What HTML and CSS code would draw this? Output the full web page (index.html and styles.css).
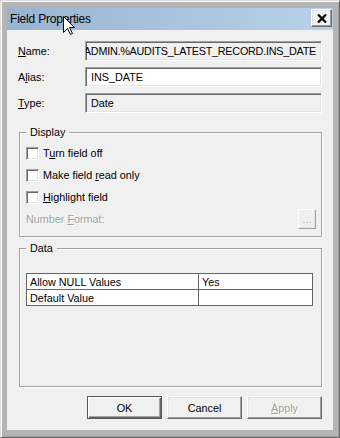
FILE: index.html
```html
<!DOCTYPE html>
<html lang="en">
<head>
    <meta charset="UTF-8">
    <title>Field Properties</title>
    <link rel="stylesheet" href="styles.css">
</head>
<body>
    <div class="window">
        <div class="titlebar">
            <span class="title">Field Properties</span>
            <span class="close">
                <svg width="10" height="9" viewBox="0 0 10 9">
                    <path d="M1 0.5 L9 8.5 M9 0.5 L1 8.5" stroke="#000" stroke-width="2.2" fill="none"/>
                </svg>
            </span>
        </div>

        <div class="client">
            <div class="fields">
                <span class="label"><u>N</u>ame:</span>
                <div class="box readonly scrolled"><span class="value">ADMIN.%AUDITS_LATEST_RECORD.INS_DATE</span></div>

                <span class="label">A<u>l</u>ias:</span>
                <div class="box"><span class="value">INS_DATE</span></div>

                <span class="label"><u>T</u>ype:</span>
                <div class="box readonly"><span class="value">Date</span></div>
            </div>

            <fieldset class="group display">
                <legend>Display</legend>
                <label class="check"><span class="checkbox"></span><span>T<u>u</u>rn field off</span></label>
                <label class="check"><span class="checkbox"></span><span>Make field <u>r</u>ead only</span></label>
                <label class="check"><span class="checkbox"></span><span><u>H</u>ighlight field</span></label>
                <div class="format-row">
                    <span class="disabled">Number <u>F</u>ormat:</span>
                    <span class="dots">...</span>
                </div>
            </fieldset>

            <fieldset class="group data">
                <legend>Data</legend>
                <table class="grid">
                    <tr><td class="key">Allow NULL Values</td><td>Yes</td></tr>
                    <tr><td class="key">Default Value</td><td></td></tr>
                </table>
            </fieldset>

            <div class="buttons">
                <span class="btn default">OK</span>
                <span class="btn">Cancel</span>
                <span class="btn off"><u>A</u>pply</span>
            </div>
        </div>

        <!-- mouse pointer over the caption -->
        <svg class="cursor" width="13" height="20" viewBox="0 0 13 20">
            <path d="M0.5 0.5 L0.5 16.5 L4.5 12.5 L7.5 18.5 L9.5 17.5 L6.5 11.5 L11.5 11.5 Z" fill="#fff" stroke="#000" stroke-width="1"/>
        </svg>
    </div>
</body>
</html>
```

FILE: styles.css
```css
* {
    box-sizing: border-box;
}
body {
    margin: 0;
    font-family: "Liberation Sans", Arial, sans-serif;
    font-size: 10.8px;
    color: #000;
    background: #b4b4b4;
}
.window {
    position: relative;
    width: 340px;
    height: 438px;
    background: #b4b4b4;
    border: 1px solid;
    border-color: #dcdcdc #696969 #696969 #dcdcdc;
    box-shadow: inset 1px 1px 0 #fff, inset -1px -1px 0 #a0a0a0;
    padding: 7px 6px 7px 6px;
    display: flex;
    flex-direction: column;
}
.titlebar {
    height: 22px;
    background: linear-gradient(to right, #99b4d1, #b9d1ea);
    display: flex;
    align-items: center;
    justify-content: space-between;
    padding: 0 1px 0 3px;
}
.title {
    font-size: 12px;
    letter-spacing: -0.2px;
}
.close {
    width: 21px;
    height: 18px;
    background: #f0f0f0;
    border: 1px solid;
    border-color: #fff #696969 #696969 #fff;
    box-shadow: inset -1px -1px 0 #a0a0a0, inset 1px 1px 0 #e3e3e3;
    display: flex;
    align-items: center;
    justify-content: center;
    margin-top: -2px;
}
.client {
    flex: 1;
    background: #f0f0f0;
    display: flex;
    flex-direction: column;
    padding: 11px 11px 11px 11px;
}
.fields {
    display: grid;
    grid-template-columns: 67px 1fr;
    row-gap: 6px;
}
.label {
    padding-top: 4px;
    line-height: 13px;
}
.box {
    height: 20px;
    background: #fff;
    border: 1px solid;
    border-color: #a0a0a0 #fff #fff #a0a0a0;
    box-shadow: inset 1px 1px 0 #696969, inset -1px -1px 0 #e3e3e3;
    display: flex;
    align-items: center;
    padding: 0 5px;
    overflow: hidden;
    white-space: nowrap;
}
.box.readonly {
    background: #f0f0f0;
}
.box.scrolled {
    justify-content: flex-end;
}
.box.scrolled .value {
    letter-spacing: -0.24px;
}
.box .value {
    flex-shrink: 0;
}
.group {
    margin: 13px 0 0 1px;
    min-width: 0;
    border: 1px solid #a0a0a0;
    box-shadow: 1px 1px 0 #fff, inset 1px 1px 0 #fff;
    padding: 3px 5px 6px 6px;
}
.group legend {
    padding: 0 4px;
    line-height: 13px;
}
.check {
    height: 22px;
    display: flex;
    align-items: center;
    gap: 4px;
}
.checkbox {
    width: 13px;
    height: 13px;
    background: #fff;
    border: 1px solid;
    border-color: #a0a0a0 #fff #fff #a0a0a0;
    box-shadow: inset 1px 1px 0 #696969, inset -1px -1px 0 #e3e3e3;
}
.format-row {
    height: 22px;
    display: flex;
    align-items: center;
    justify-content: space-between;
}
.disabled {
    color: #a0a0a0;
    text-shadow: 1px 1px 0 #fff;
}
.dots {
    width: 18px;
    height: 20px;
    border: 1px solid;
    border-color: #fff #a0a0a0 #a0a0a0 #fff;
    box-shadow: inset -1px -1px 0 #e3e3e3;
    color: #a0a0a0;
    text-shadow: 1px 1px 0 #fff;
    display: flex;
    align-items: flex-end;
    justify-content: center;
    padding-bottom: 4px;
    line-height: 10px;
}
.group.data {
    margin-top: 5px;
    flex: 1;
    padding-top: 18px;
}
.grid {
    width: 287px;
    border-collapse: collapse;
    background: #fff;
}
.grid td {
    border: 1px solid #646464;
    height: 16px;
    padding: 0 2px 0 3px;
    line-height: 14px;
}
.grid td.key {
    width: 172px;
}
.buttons {
    display: flex;
    justify-content: flex-end;
    gap: 5px;
    margin-top: 9px;
}
.btn {
    width: 75px;
    height: 23px;
    background: #f0f0f0;
    border: 1px solid;
    border-color: #fff #696969 #696969 #fff;
    box-shadow: inset -1px -1px 0 #a0a0a0, inset 1px 1px 0 #e3e3e3;
    display: flex;
    align-items: center;
    justify-content: center;
}
.btn.default {
    border-color: #555;
    box-shadow: inset 1px 1px 0 #fff, inset -1px -1px 0 #696969, inset -2px -2px 0 #a0a0a0;
}
.btn.off {
    color: #a0a0a0;
    text-shadow: 1px 1px 0 #fff;
}
.cursor {
    position: absolute;
    left: 62px;
    top: 15px;
}
```
